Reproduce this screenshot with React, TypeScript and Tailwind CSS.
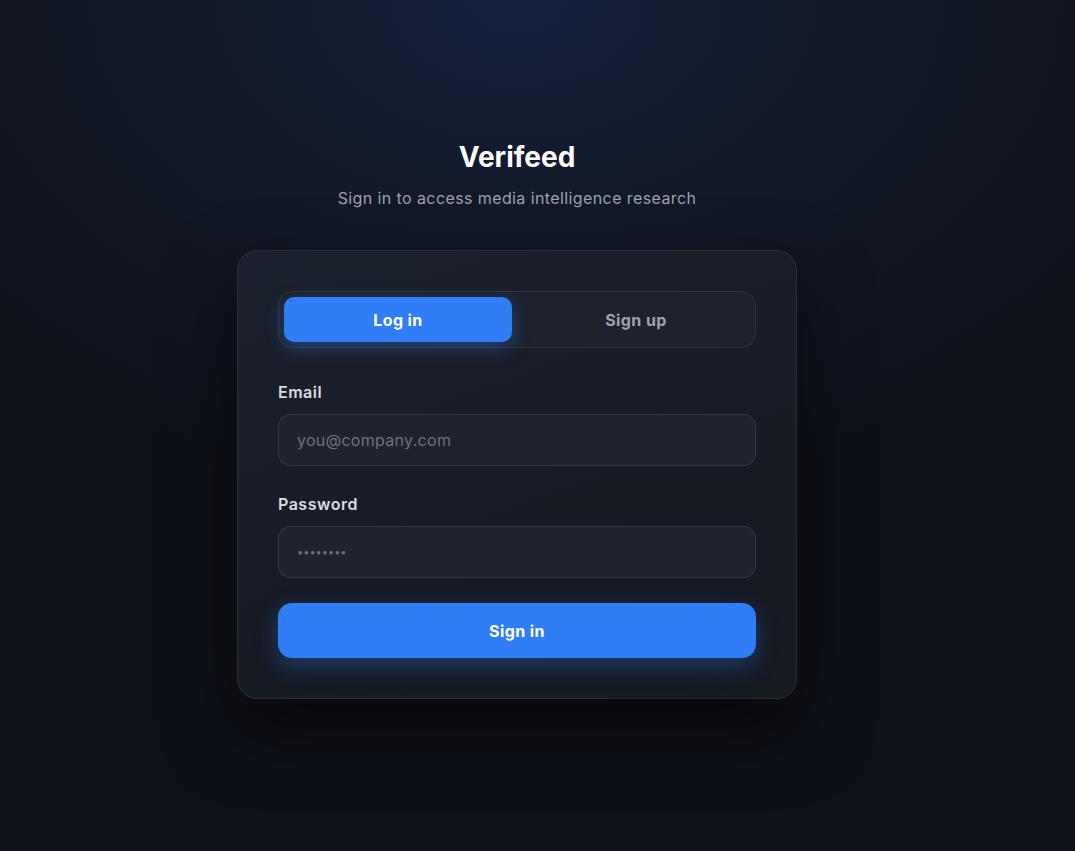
import React from "react";

export default function App() {
  return (
    <div
      className="min-h-[851px] w-full bg-[#0f1119] bg-[radial-gradient(ellipse_70%_60%_at_48%_0%,#15223d_0%,#111827_45%,#0f1119_100%)] flex flex-col items-center pt-[138px] pr-[41px] text-white"
      style={{ fontFamily: "Inter, 'Noto Sans', sans-serif" }}
    >
      <h1 className="text-[28px] leading-[38px] font-bold tracking-[0px] text-white">Verifeed</h1>
      <p className="mt-[10px] text-[16px] leading-[24px] tracking-[0.4px] text-[#9ca3af]">
        Sign in to access media intelligence research
      </p>

      <div className="mt-[40px] w-[560px] rounded-[20px] border border-[#2a303b] bg-[linear-gradient(160deg,#1b212e_0%,#171b24_60%,#151920_100%)] px-[40px] py-[40px] shadow-[0_30px_70px_rgba(0,0,0,0.5)]">
        <div className="flex gap-[10px] rounded-[14px] border border-[#2d3440] bg-[#1d222d] p-[5px] h-[57px]">
          <button className="flex-1 rounded-[10px] bg-[#2f7ef5] text-[16px] font-bold tracking-[0.4px] text-white shadow-[0_6px_18px_rgba(47,126,245,0.35)]">
            Log in
          </button>
          <button className="flex-1 rounded-[10px] text-[16px] font-bold tracking-[0.4px] text-[#9ca3af]">Sign up</button>
        </div>

        <label className="mt-[32px] block text-[16px] leading-[24px] font-semibold tracking-[0.5px] text-[#d8dce3]">Email</label>
        <div className="mt-[10px] flex h-[52px] items-center rounded-[12px] border border-[#323845] bg-[#1f232d] px-[18px]">
          <span className="text-[16px] tracking-[0.3px] text-[#6b7280]">you@company.com</span>
        </div>

        <label className="mt-[26px] block text-[16px] leading-[24px] font-semibold tracking-[0.5px] text-[#d8dce3]">Password</label>
        <div className="mt-[10px] flex h-[52px] items-center rounded-[12px] border border-[#323845] bg-[#1f232d] px-[18px]">
          <span className="text-[11px] tracking-[0px] text-[#6b7280]">••••••••</span>
        </div>

        <button className="mt-[25px] flex h-[55px] w-full items-center justify-center rounded-[14px] bg-[#2f7ef5] text-[16px] font-bold tracking-[0.4px] text-white shadow-[0_8px_22px_rgba(47,126,245,0.35)]">
          Sign in
        </button>
      </div>
    </div>
  );
}
